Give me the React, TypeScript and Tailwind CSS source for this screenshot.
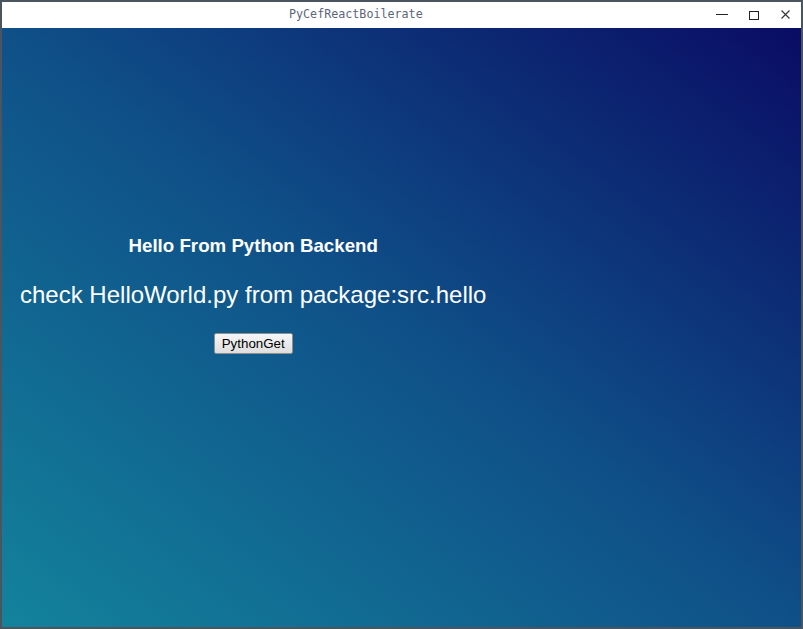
const App = () => {
  return (
    <div className="w-[803px] h-[629px] bg-[#4a5560] pt-[2px] pl-[2px] pr-[2px] pb-[2px] overflow-hidden font-['Liberation_Sans',Arial,sans-serif]">
      <div className="flex flex-col h-full bg-white">
        {/* title bar */}
        <div className="relative flex items-center h-[26px] shrink-0 bg-white pl-[287px]">
          <span className="font-['DejaVu_Sans_Mono',monospace] text-[11.7px] text-[#5b6678]">
            PyCefReactBoilerate
          </span>
          <svg className="absolute left-[714px] top-[12px]" width="12" height="1" viewBox="0 0 12 1">
            <rect width="12" height="1" fill="#222" />
          </svg>
          <svg className="absolute left-[747px] top-[9px]" width="10" height="9" viewBox="0 0 10 9">
            <rect x="0.5" y="0.5" width="9" height="8" fill="none" stroke="#222" strokeWidth="1" />
          </svg>
          <svg className="absolute left-[779px] top-[8px]" width="9" height="9" viewBox="0 0 9 9">
            <path d="M0.5 0.5 L8.5 8.5 M8.5 0.5 L0.5 8.5" stroke="#333" strokeWidth="1.1" />
          </svg>
        </div>

        {/* page */}
        <div className="flex-1 bg-[linear-gradient(to_top_right,#13839c_0%,#0f5088_50%,#0a0c64_100%)]">
          <div className="inline-flex flex-col items-center px-[18px] pt-[207px] text-white">
            <h3 className="text-[18.72px] font-bold leading-[22px]">Hello From Python Backend</h3>
            <p className="mt-[24px] text-[24px] leading-[28px]">check HelloWorld.py from package:src.hello</p>
            <button className="mt-[24px] h-[21px] px-[7px] text-[13.33px] text-black leading-none border border-[#8f8f8f] rounded-[2px] bg-[linear-gradient(#f6f6f6,#dedede)]">
              PythonGet
            </button>
          </div>
        </div>
      </div>
    </div>
  );
};

export default App;
